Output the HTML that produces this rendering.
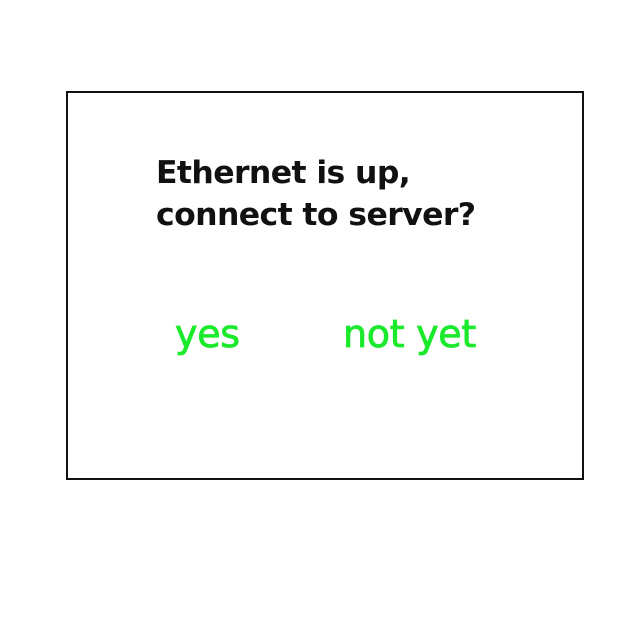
<!DOCTYPE html>
<html><head><style>
html,body{margin:0;padding:0;background:#fff;width:640px;height:640px;overflow:hidden;}
.box{position:absolute;left:66px;top:91px;width:514px;height:385px;border:2px solid #111;}
.t{position:absolute;left:156px;font-family:"DejaVu Sans","Liberation Sans",sans-serif;font-weight:bold;font-size:31.5px;color:#111;white-space:nowrap;letter-spacing:-0.6px;}
.g{position:absolute;font-family:"DejaVu Sans","Liberation Sans",sans-serif;font-size:38px;color:#1bea2c;white-space:nowrap;letter-spacing:-0.3px;-webkit-text-stroke:0.8px #1bea2c;}
</style></head><body>
<div class="box"></div>
<div class="t" style="top:155px">Ethernet is up,</div>
<div class="t" style="top:197px">connect to server?</div>
<div class="g" style="left:175px;top:312px">yes</div>
<div class="g" style="left:343px;top:312px">not yet</div>
</body></html>
